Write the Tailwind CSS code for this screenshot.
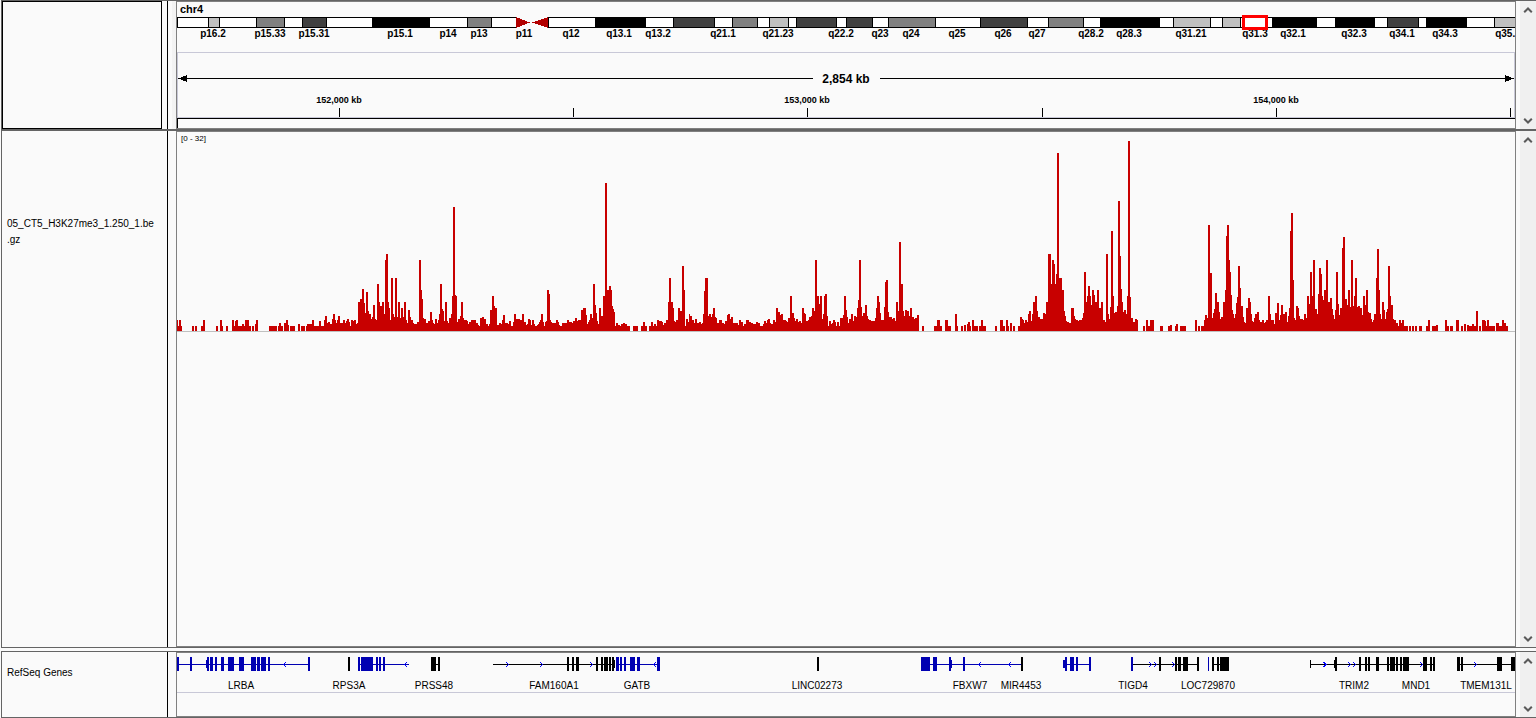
<!DOCTYPE html>
<html lang="en">
<head>
<meta charset="utf-8">
<meta name="viewport" content="width=device-width, initial-scale=1">
<title>Genome browser – chr4</title>
<script src="https://cdn.jsdelivr.net/npm/@tailwindcss/browser@4"></script>
</head>
<body class="flex min-h-screen flex-col bg-[#fafafa] pl-px font-['Liberation_Sans',Arial,sans-serif] text-black">

<header class="flex h-[130px] border-y border-l border-[#646464]">
  <div class="w-[166px] shrink-0 border-r border-black pr-[5px]">
    <div class="h-full border border-black"></div>
  </div>
  <div class="ml-1 w-1 shrink-0 bg-[#f3f3f3]"></div>
  <div class="min-w-0 flex-1 border border-[#808080]">
    <svg id="ideogram" class="block h-[50px] w-full overflow-hidden text-[10px] font-bold" shape-rendering="crispEdges" role="img" aria-label="Chromosome 4 ideogram"></svg>
    <svg id="ruler" class="block h-[76px] w-full overflow-hidden text-[9px] font-bold" shape-rendering="crispEdges" role="img" aria-label="Ruler"></svg>
  </div>
  <div class="ml-1 flex w-4 shrink-0 flex-col justify-between bg-[#f0f0f0]">
    <button type="button" aria-label="Scroll header up" class="flex h-[17px] items-center justify-center"><svg class="h-[6px] w-[10px]" viewBox="0 0 10 6" fill="none" stroke="#5a5a5a" stroke-width="2"><path d="M1.2 5.3 5 1.5 8.8 5.3"/></svg></button>
    <button type="button" aria-label="Scroll header down" class="flex h-[17px] items-center justify-center"><svg class="h-[6px] w-[10px]" viewBox="0 0 10 6" fill="none" stroke="#5a5a5a" stroke-width="2"><path d="M1.2.7 5 4.5 8.8.7"/></svg></button>
  </div>
</header>

<main class="flex flex-1 border-y border-l border-[#646464]">
  <div class="w-[166px] shrink-0 border-r border-black pt-[85px] pl-[5px] text-[10px] leading-4">
    <p>05_CT5_H3K27me3_1.250_1.be<br>.gz</p>
  </div>
  <div class="ml-2 min-w-0 flex-1 border border-[#808080]">
    <svg id="signal" class="block h-[200px] w-full overflow-hidden text-[8px]" shape-rendering="crispEdges" role="img" aria-label="H3K27me3 signal"></svg>
  </div>
  <div class="ml-1 flex w-4 shrink-0 flex-col justify-between bg-[#f0f0f0]">
    <button type="button" aria-label="Scroll tracks up" class="flex h-[17px] items-center justify-center"><svg class="h-[6px] w-[10px]" viewBox="0 0 10 6" fill="none" stroke="#5a5a5a" stroke-width="2"><path d="M1.2 5.3 5 1.5 8.8 5.3"/></svg></button>
    <button type="button" aria-label="Scroll tracks down" class="flex h-[17px] items-center justify-center"><svg class="h-[6px] w-[10px]" viewBox="0 0 10 6" fill="none" stroke="#5a5a5a" stroke-width="2"><path d="M1.2.7 5 4.5 8.8.7"/></svg></button>
  </div>
</main>

<footer class="mt-[3px] flex h-[67px] border-y border-l border-[#646464]">
  <div class="w-[166px] shrink-0 border-r border-black pt-[13px] pl-[5px] text-[10px] leading-4">
    <p>RefSeq Genes</p>
  </div>
  <div class="ml-2 min-w-0 flex-1 border border-[#808080]">
    <svg id="genes" class="block h-[40px] w-full overflow-hidden text-[10px]" shape-rendering="crispEdges" role="img" aria-label="RefSeq genes"></svg>
  </div>
  <div class="ml-1 flex w-4 shrink-0 flex-col justify-between bg-[#f0f0f0]">
    <button type="button" aria-label="Scroll genes up" class="flex h-[17px] items-center justify-center"><svg class="h-[6px] w-[10px]" viewBox="0 0 10 6" fill="none" stroke="#5a5a5a" stroke-width="2"><path d="M1.2 5.3 5 1.5 8.8 5.3"/></svg></button>
    <button type="button" aria-label="Scroll genes down" class="flex h-[17px] items-center justify-center"><svg class="h-[6px] w-[10px]" viewBox="0 0 10 6" fill="none" stroke="#5a5a5a" stroke-width="2"><path d="M1.2.7 5 4.5 8.8.7"/></svg></button>
  </div>
</footer>

<script>
// All x positions are in track units: the view spans 177 to 1515.
const START = 177, SPAN = 1338;

// Cytobands: start, end, stain
const bands = [[208,220,'#c0c0c0'],[256,285,'#808080'],[302,327,'#404040'],[372,430,'#000'],[467,492,'#808080'],
[595,646,'#000'],[673,715,'#404040'],[732,758,'#808080'],[769,789,'#c0c0c0'],[796,837,'#404040'],[846,873,'#404040'],
[888,936,'#808080'],[980,1028,'#404040'],[1048,1084,'#808080'],[1100,1160,'#000'],[1173,1211,'#c0c0c0'],[1222,1241,'#c0c0c0'],
[1272,1317,'#000'],[1335,1375,'#000'],[1387,1419,'#404040'],[1426,1467,'#000'],[1494,1520,'#c0c0c0']];
const bandNames = [[213,'p16.2'],[270,'p15.33'],[314,'p15.31'],[400,'p15.1'],[448,'p14'],[479,'p13'],[524,'p11'],[571,'q12'],
[619,'q13.1'],[658,'q13.2'],[723,'q21.1'],[778,'q21.23'],[841,'q22.2'],[880,'q23'],[911,'q24'],[957,'q25'],[1003,'q26'],
[1037,'q27'],[1091,'q28.2'],[1129,'q28.3'],[1191,'q31.21'],[1255,'q31.3'],[1293,'q32.1'],[1354,'q32.3'],[1402,'q34.1'],
[1445,'q34.3'],[1508,'q35.1']];

// Signal steps: "position height", each height holds until the next position
const signal = `177 11,178 5,179 11,181 5,182 0,192 5,194 0,195 5,197 0,201 5,203 11,205 0,216 5,218 0,220 11,222 5,223 0,226 5,228 0,232 11,234 5,235 10,236 11,238 5,242 7,244 5,245 11,249 5,251 0,252 5,254 0,255 7,256 11,258 0,269 5,277 0,278 5,279 8,281 5,283 0,284 8,286 11,288 6,289 0,290 5,295 0,298 7,300 0,301 5,305 0,306 5,307 7,312 11,314 5,319 10,321 5,324 11,325 15,327 8,328 9,330 7,332 12,333 17,335 11,336 8,337 11,338 15,340 8,343 11,345 8,346 10,347 12,349 9,350 5,351 11,353 10,354 11,356 7,357 8,358 29,360 32,362 42,364 28,365 18,366 39,368 20,369 17,371 12,372 14,373 26,375 12,376 11,377 47,379 29,380 25,382 29,384 17,385 71,386 77,388 29,389 23,390 11,391 53,393 17,394 14,395 53,397 14,398 29,400 13,401 23,403 14,404 29,406 11,407 8,408 21,410 14,411 11,413 8,414 7,417 9,419 71,421 41,422 32,423 13,424 12,426 8,428 10,430 19,432 11,433 8,434 7,435 12,437 8,438 11,439 17,440 47,442 22,443 20,444 10,445 29,447 10,448 8,449 13,451 17,452 35,453 124,455 36,456 35,457 9,458 12,460 15,461 29,463 13,464 11,467 10,468 7,469 9,471 11,476 8,478 6,479 5,480 13,482 14,484 12,486 7,488 5,489 7,490 21,492 35,494 25,495 23,497 6,499 8,501 7,502 11,503 16,505 8,508 7,509 10,511 5,513 9,514 17,516 12,520 11,522 17,524 9,526 6,527 7,528 12,530 11,531 6,532 11,534 7,535 5,537 6,538 7,539 9,540 11,541 17,543 9,544 5,545 9,546 10,547 41,549 37,550 11,551 9,552 8,556 11,558 9,559 6,560 5,562 8,567 11,569 9,572 8,573 10,575 13,577 10,578 11,581 21,583 23,586 16,587 7,588 9,589 11,590 17,592 13,593 47,595 26,596 18,597 10,598 7,599 23,601 15,603 35,605 148,607 41,609 45,611 41,612 25,613 22,614 19,615 5,616 8,618 6,620 5,621 7,623 8,625 7,627 5,630 0,633 5,638 0,641 5,643 9,645 5,647 0,649 5,651 9,653 5,654 7,656 5,657 11,659 10,662 9,663 6,664 8,666 11,668 29,669 53,671 29,673 23,674 10,675 9,676 11,678 23,680 20,682 65,684 41,685 5,686 12,688 9,689 17,690 15,692 11,694 8,695 12,697 8,699 9,701 7,702 8,703 17,704 40,705 53,708 15,709 17,711 14,712 17,713 23,715 14,716 13,717 8,719 11,722 8,724 7,725 10,727 16,728 17,730 12,731 14,733 8,738 6,739 11,741 9,743 5,744 7,746 11,749 9,751 8,753 7,756 9,758 8,760 5,763 7,764 10,766 8,767 11,768 12,770 8,771 7,773 11,775 9,776 23,778 19,780 16,781 17,783 11,786 10,787 9,788 13,790 35,792 18,794 13,795 10,796 12,798 9,799 10,801 8,802 23,804 18,805 17,806 10,808 11,809 14,811 15,812 23,814 20,815 71,817 35,819 27,820 35,822 12,823 17,824 35,825 37,827 15,828 5,829 10,831 7,832 8,833 11,835 9,836 5,837 9,839 5,840 13,843 16,844 35,846 21,847 14,848 8,849 12,851 17,853 10,854 15,856 14,857 23,858 31,859 71,861 24,862 15,863 18,865 26,867 15,868 12,869 11,871 10,875 13,876 23,877 35,879 29,880 18,881 11,884 24,885 49,886 51,888 19,889 14,892 12,893 13,895 10,896 29,898 20,899 89,901 47,903 20,904 15,905 21,907 20,909 15,910 23,912 14,914 12,915 13,917 16,919 0,922 5,924 0,934 5,937 11,940 5,942 0,945 11,948 5,951 0,955 17,957 5,958 0,961 5,963 0,964 6,966 0,967 7,968 9,970 5,971 0,972 11,974 5,978 0,979 5,981 11,983 5,986 0,995 5,997 0,1000 11,1003 5,1005 0,1006 11,1008 5,1009 0,1010 8,1012 0,1013 5,1015 0,1018 5,1020 14,1022 12,1023 11,1024 8,1025 11,1027 9,1028 17,1029 20,1031 10,1032 17,1033 29,1035 35,1037 20,1038 14,1040 12,1043 18,1045 17,1046 29,1048 77,1051 47,1052 71,1054 67,1055 47,1056 57,1057 178,1059 53,1062 41,1064 20,1065 15,1066 10,1067 9,1069 8,1071 23,1074 15,1075 12,1076 11,1078 10,1079 11,1082 13,1083 18,1084 59,1086 29,1087 35,1088 45,1090 35,1091 26,1092 41,1094 36,1095 29,1097 41,1099 23,1101 29,1103 11,1105 9,1106 77,1108 17,1109 12,1110 24,1111 100,1113 35,1114 18,1115 19,1117 25,1118 130,1120 75,1121 42,1122 29,1123 19,1124 21,1126 17,1127 35,1128 190,1130 34,1131 13,1133 9,1135 12,1137 11,1138 0,1143 5,1145 0,1146 11,1148 5,1150 11,1154 0,1160 5,1163 0,1168 5,1170 6,1172 0,1175 5,1176 7,1178 0,1180 5,1186 0,1195 11,1197 0,1198 5,1200 0,1201 5,1204 11,1205 16,1207 13,1208 106,1210 58,1212 13,1213 18,1214 22,1215 38,1217 29,1219 19,1220 12,1221 14,1223 29,1225 41,1226 95,1227 106,1229 71,1230 59,1231 36,1232 21,1233 17,1234 13,1235 17,1236 28,1237 34,1238 65,1240 43,1241 25,1243 14,1244 9,1245 8,1246 23,1248 33,1250 29,1251 17,1252 10,1253 9,1254 13,1255 17,1257 19,1259 11,1260 9,1262 11,1264 8,1265 9,1266 11,1268 35,1270 17,1271 11,1274 7,1275 18,1277 28,1279 11,1280 16,1281 26,1283 17,1285 19,1287 9,1288 15,1289 23,1290 100,1291 118,1293 51,1294 13,1295 11,1296 25,1298 23,1299 15,1300 12,1303 11,1304 17,1306 13,1307 35,1309 27,1310 59,1312 35,1313 71,1315 22,1317 17,1318 37,1319 63,1321 57,1322 35,1323 31,1324 41,1326 71,1328 29,1330 33,1332 22,1333 16,1334 12,1335 21,1336 59,1338 27,1339 16,1340 23,1342 83,1343 94,1345 32,1347 26,1348 41,1350 24,1351 71,1353 25,1354 35,1355 53,1357 24,1358 25,1360 23,1362 16,1363 35,1365 26,1366 41,1368 19,1369 18,1371 12,1372 9,1373 11,1374 17,1376 53,1377 82,1379 41,1380 17,1381 12,1382 29,1384 21,1385 12,1386 19,1387 22,1388 65,1390 35,1391 26,1393 12,1394 11,1396 8,1398 5,1399 11,1401 8,1402 11,1404 5,1408 0,1409 5,1411 0,1412 5,1414 0,1415 5,1417 0,1419 5,1422 0,1426 5,1428 11,1430 0,1432 5,1436 6,1438 0,1445 11,1447 5,1449 0,1450 5,1453 0,1456 11,1459 0,1461 5,1463 0,1464 7,1466 0,1467 6,1469 5,1472 7,1474 5,1476 20,1478 0,1479 5,1481 0,1482 11,1485 10,1486 5,1487 11,1489 5,1495 0,1496 8,1499 5,1502 11,1504 8,1506 5,1508 0`
  .split(',').map(p => p.split(' ').map(Number));

// Genes: c colour, l intron line, e exons [from, to], s low (untranslated) blocks, a arrow tips, d arrow direction
const B = '#0000b2', K = '#000';
const genes = [
 {c:B,l:[177,310],e:[[177,179],[190,192],[207,209],[210,213],[215,217],[221,224],[228,234],[239,244],[251,256],[257,260],[261,266],[268,270],[308,310]],s:[[206,207]],a:[283],d:-1},
 {c:K,l:[348,350],e:[[348,350]]},
 {c:B,l:[358,409],e:[[358,360],[361,373],[376,378],[379,381],[383,385]],a:[404],d:-1},
 {c:K,l:[431,440],e:[[431,436],[438,440]]},
 {c:K,l:[493,615],e:[[567,569],[572,574],[576,579],[596,598],[601,603],[604,608],[609,611],[612,614]],s:[[614,615]],a:[508,542,592],d:1},
 {c:B,l:[616,660],e:[[616,619],[620,622],[624,626],[630,635],[637,640],[657,660]],a:[653],d:-1},
 {c:K,l:[817,819],e:[[817,819]]},
 {c:B,l:[921,1021],e:[[921,930],[933,937],[949,951],[963,965]],s:[[951,952]],a:[978,1008],d:-1},
 {c:K,l:[1021,1023],e:[[1021,1023]]},
 {c:B,l:[1063,1091],e:[[1065,1067],[1070,1074],[1076,1078],[1089,1091]],s:[[1063,1065]]},
 {c:K,l:[1133,1199],e:[[1159,1161],[1175,1177],[1178,1181],[1183,1188],[1197,1199]],a:[1151,1156,1174],d:1},
 {c:B,l:[1131,1133],e:[[1131,1133]]},
 {c:B,l:[1208,1209],e:[[1208,1209]]},
 {c:K,l:[1212,1229],e:[[1212,1214],[1217,1219],[1220,1229]]},
 {c:K,l:[1310,1435],e:[[1335,1337],[1359,1361],[1365,1367],[1368,1370],[1376,1379],[1387,1389],[1390,1395],[1396,1398],[1400,1402],[1403,1409],[1423,1427],[1430,1432],[1433,1435]],s:[[1310,1311],[1334,1335]],a:[1325,1326,1350,1355,1422],d:1},
 {c:K,l:[1457,1515],e:[[1457,1460],[1461,1463],[1497,1502],[1511,1515]],a:[1476],d:1}];
const geneNames = [[241,'LRBA'],[349,'RPS3A'],[434,'PRSS48'],[554,'FAM160A1'],[637,'GATB'],[817,'LINC02273'],[970,'FBXW7'],
[1021,'MIR4453'],[1133,'TIGD4'],[1208,'LOC729870'],[1354,'TRIM2'],[1416,'MND1'],[1486,'TMEM131L']];

function draw() {
  const el = id => document.getElementById(id);
  const width = el('signal').getBoundingClientRect().width;
  const X = v => (v - START) * width / SPAN;
  const rect = (a, b, y, h, c) => `<rect x="${X(a)}" y="${y}" width="${X(b) - X(a)}" height="${h}" fill="${c}"/>`;
  const vline = (x, y, h, c) => `<rect x="${X(x)}" y="${y}" width="1" height="${h}" fill="${c}"/>`;
  const label = (x, y, t, extra = '') => `<text x="${X(x)}" y="${y}" text-anchor="middle" ${extra}>${t}</text>`;
  // Open chevron drawn pixel by pixel: tip on the intron line, two steps back on either side
  const chevron = (x, d) => [0, 1, 2].map(i =>
    `<path fill="#00f" d="M${X(x) - i * d} ${11 - i}h1v1h-1zM${X(x) - i * d} ${11 + i}h1v1h-1z"/>`).join('');

  // Ideogram
  let s = '<text x="3" y="11" class="text-[11px]">chr4</text>';
  s += rect(177, 516, 15, 11, K) + rect(178, 516, 16, 9, '#fff');
  s += rect(548, 1516, 15, 11, K) + rect(549, 1516, 16, 9, '#fff');
  s += bands.map(([a, b, c]) => rect(a, b, 15, 11, K) +
    `<rect x="${X(a) + 1}" y="16" width="${X(b) - X(a) - 2}" height="9" fill="${c}"/>`).join('');
  s += `<path fill="#b20000" d="M${X(516)} 15 L${X(530)} 20.5 L${X(516)} 26Z M${X(548)} 15 L${X(532)} 20.5 L${X(548)} 26Z"/>`;
  s += bandNames.map(([x, t]) => label(x, 35, t)).join('');
  s += `<rect x="${X(1242) + 1.5}" y="14.5" width="${Math.max(X(1268) - X(1242) - 3, 0)}" height="12" fill="none" stroke="#f00" stroke-width="3"/>`;
  el('ideogram').innerHTML = s;

  // Ruler
  const edge = '#c8c8d7';
  s = rect(177, 1515, 0, 1, edge) + vline(177, 0, 66, edge) + vline(1514, 0, 66, edge) + rect(177, 1515, 65, 1, edge);
  s += rect(177, 1515, 66, 1, K) + vline(177, 66, 10, K);
  s += rect(179, 813, 26, 1, K) + rect(880, 1514, 26, 1, K);
  s += `<path d="M${X(178)} 26.5l9-3.5v7z M${X(1514)} 26.5l-9-3.5v7z"/>`;
  s += label(846, 31, '2,854 kb', 'class="text-[12px]"');
  s += [339, 573, 807, 1042, 1276, 1510].map(x => vline(x, 56, 9, K)).join('');
  s += label(339, 51, '152,000 kb') + label(807, 51, '153,000 kb') + label(1276, 51, '154,000 kb');
  el('ruler').innerHTML = s;

  // Signal
  let d = `M0 199`;
  signal.forEach(([x, h]) => { d += `H${X(x)}V${199 - h}`; });
  s = `<path fill="#c80000" d="${d}V199Z"/>` + rect(177, 1515, 199, 1, '#c0c0c0');
  s += '<text x="4" y="9">[0 - 32]</text>';
  el('signal').innerHTML = s;

  // Genes
  s = genes.map(g => rect(g.l[0], g.l[1], 11, 1, g.c) +
    g.e.map(([a, b]) => rect(a, b, 4, 14, g.c)).join('') +
    (g.s || []).map(([a, b]) => rect(a, b, 7, 8, g.c)).join('') +
    (g.a || []).map(x => chevron(x, g.d)).join('')).join('');
  s += geneNames.map(([x, t]) => label(x, 36, t)).join('');
  s += rect(177, 1515, 39, 1, edge);
  el('genes').innerHTML = s;
}
draw();
new ResizeObserver(draw).observe(document.getElementById('signal'));
addEventListener('load', draw);
</script>
</body>
</html>
